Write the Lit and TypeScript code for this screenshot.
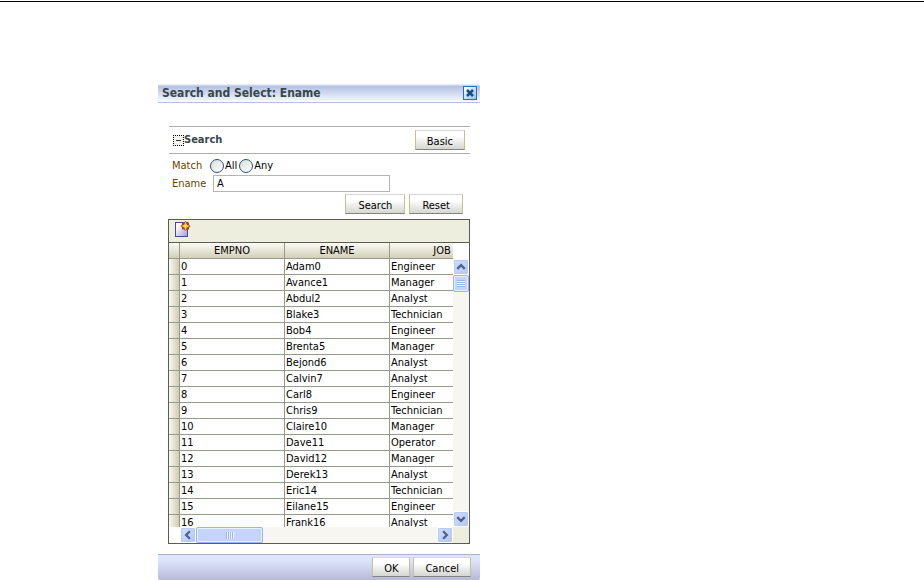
import { LitElement, html, css, svg } from "lit";
import { customElement, property } from "lit/decorators.js";

interface Employee {
  empno: number;
  ename: string;
  job: string;
}

const NAMES: [string, string][] = [
  ["Adam", "Engineer"],
  ["Avance", "Manager"],
  ["Abdul", "Analyst"],
  ["Blake", "Technician"],
  ["Bob", "Engineer"],
  ["Brenta", "Manager"],
  ["Bejond", "Analyst"],
  ["Calvin", "Analyst"],
  ["Carl", "Engineer"],
  ["Chris", "Technician"],
  ["Claire", "Manager"],
  ["Dave", "Operator"],
  ["David", "Manager"],
  ["Derek", "Analyst"],
  ["Eric", "Technician"],
  ["Eilane", "Engineer"],
  ["Frank", "Analyst"],
];

const EMPLOYEES: Employee[] = NAMES.map(([name, job], i) => ({
  empno: i,
  ename: `${name}${i}`,
  job,
}));

const CHEVRONS: Record<string, string> = {
  up: "M3.5 9.5 L7.5 5.5 L11.5 9.5",
  down: "M3.5 5.5 L7.5 9.5 L11.5 5.5",
  left: "M9.5 3.5 L5.5 7.5 L9.5 11.5",
  right: "M5.5 3.5 L9.5 7.5 L5.5 11.5",
};

const detach = html`<svg width="16" height="16" viewBox="0 0 16 16" aria-hidden="true">
  <defs>
    <linearGradient id="page" x1="0" y1="0" x2="1" y2="1">
      <stop offset="0.2" stop-color="#ffffff" />
      <stop offset="1" stop-color="#9c9cd8" />
    </linearGradient>
  </defs>
  <rect x="0.5" y="1.5" width="12" height="14" fill="url(#page)" stroke="#4a4a86" />
  <path d="M10.500 0 L12 1.500 L14 1.500 L14 3.500 L15.500 5 L14 6.500 L14 8.500 L12 8.500 L10.500 10 L9 8.500 L7 8.500 L7 6.500 L5.500 5 L7 3.500 L7 1.500 L9 1.500 Z" fill="#a8462a" />
  <path d="M10.500 0.500 L11.800 3.700 L15 5 L11.800 6.300 L10.500 9.500 L9.200 6.300 L6 5 L9.200 3.700 Z" fill="#ffcf2a" />
  <rect x="10" y="4" width="1" height="2" fill="#fffbd0" />
</svg>`;

/** A scroll bar with arrow buttons at both ends and a gripped thumb. */
@customElement("classic-scrollbar")
export class ClassicScrollbar extends LitElement {
  @property({ reflect: true }) direction: "vertical" | "horizontal" = "vertical";

  static styles = css`
    :host {
      display: flex;
      background: #f7f6f1;
    }
    :host([direction="vertical"]) {
      flex-direction: column;
      width: 16px;
    }
    :host([direction="horizontal"]) {
      height: 16px;
    }
    button {
      flex: none;
      width: 16px;
      height: 16px;
      padding: 0;
      border: 1px solid #ffffff;
      border-radius: 2px;
      background: linear-gradient(135deg, #cfdcfd, #b4c8f6);
      box-shadow: inset 0 0 0 1px #b9cbf3;
    }
    svg {
      display: block;
      width: 14px;
      height: 14px;
    }
    .arrow {
      fill: none;
      stroke: #4d6185;
      stroke-width: 2.4;
    }
    .thumb {
      display: flex;
      justify-content: center;
      align-items: center;
      box-sizing: border-box;
      border: 1px solid #98b4ea;
      border-radius: 2px;
      box-shadow: inset 0 0 0 1px #e9f0ff;
      background: #c4d4fc;
    }
    .vertical {
      height: 17px;
      width: 16px;
    }
    .horizontal {
      width: 67px;
      height: 16px;
    }
    .grip {
      width: 8px;
      height: 7px;
      background: repeating-linear-gradient(#9db4ec 0 1px, #eef4fe 1px 2px);
    }
    .horizontal .grip {
      background: repeating-linear-gradient(90deg, #9db4ec 0 1px, #eef4fe 1px 2px);
    }
    .space {
      flex: 1;
    }
  `;

  private arrow(name: string) {
    return html`<button aria-label="Scroll ${name}">
      <svg viewBox="0 0 15 15">${svg`<path class="arrow" d=${CHEVRONS[name]} />`}</svg>
    </button>`;
  }

  render() {
    const [back, forward] = this.direction === "vertical" ? ["up", "down"] : ["left", "right"];
    return html`${this.arrow(back)}
      <div class="thumb ${this.direction}"><div class="grip"></div></div>
      <div class="space"></div>
      ${this.arrow(forward)}`;
  }
}

@customElement("app-root")
export class AppRoot extends LitElement {
  static styles = css`
    :host {
      display: block;
      background: #ffffff;
      color: #000000;
      font: 11px/16px "DejaVu Sans Condensed", "DejaVu Sans", sans-serif;
    }
    .page {
      display: grid;
      grid-template-columns: 158fr 322fr 444fr;
      padding-top: 81px;
    }
    .rule {
      height: 1px;
      margin: 0;
      border: 0;
      border-top: 1px solid #000000;
      padding: 0;
    }
    .top {
      padding-top: 1px;
    }
    .dialog {
      grid-column: 2;
      min-width: 0;
    }
    .title {
      display: flex;
      justify-content: space-between;
      align-items: center;
      box-sizing: border-box;
      height: 19px;
      padding: 0 3px 0 4px;
      border-bottom: 1px solid #b4c0dc;
      border-top-left-radius: 2px;
      border-top-right-radius: 2px;
      background: linear-gradient(#e4ebfa 0 1px, #b3c0e0 2px, #eef3fe 16px, #ffffff);
    }
    h1 {
      margin: 0;
      font-size: 12px;
      line-height: 18px;
      color: #37474a;
    }
    .close {
      width: 14px;
      height: 14px;
      padding: 0;
      border: 1px solid #2e6ea6;
      background: linear-gradient(135deg, #ffffff, #8fc4ec);
    }
    .close svg,
    .tool svg {
      display: block;
    }
    .content {
      padding: 23px 10px 10px;
    }
    .section {
      display: flex;
      justify-content: space-between;
      align-items: center;
      box-sizing: border-box;
      height: 28px;
      margin-left: 1px;
      padding: 0 5px 0 4px;
      border: 1px solid #adadad;
      border-width: 1px 0;
    }
    .heading {
      display: flex;
      align-items: center;
    }
    .toggle {
      display: block;
      width: 11px;
      height: 11px;
      padding: 0;
      border: 1px dotted #000000;
      background: #f2f2ee;
    }
    .toggle svg {
      display: block;
    }
    h2 {
      margin: 0;
      font-size: 11px;
      line-height: 16px;
      color: #37474a;
    }
    .button {
      box-sizing: border-box;
      height: 20px;
      padding: 3px 11px 0;
      border: 1px solid #c5c28f;
      border-top-color: #d6d6d6;
      border-bottom-color: #85857d;
      background: linear-gradient(#ffffff 30%, #d4d6d0);
      color: #000000;
      font: inherit;
      line-height: 16px;
    }
    .form {
      display: grid;
      grid-template-columns: 38px 1fr;
      align-items: center;
      padding: 3px 6px 0 4px;
    }
    .label {
      color: #6b4300;
    }
    .choices {
      display: flex;
      align-items: center;
      height: 18px;
    }
    .choices label {
      padding: 0 2px 0 1px;
    }
    input[type="radio"] {
      appearance: none;
      box-sizing: border-box;
      width: 14px;
      height: 14px;
      margin: 0;
      border: 1px solid #1f5183;
      border-radius: 50%;
      background: linear-gradient(135deg, #dcdcd7, #ffffff);
    }
    input[type="text"] {
      box-sizing: border-box;
      width: 177px;
      max-width: 100%;
      height: 17px;
      margin-left: 3px;
      padding: 0 3px;
      border: 1px solid #b5b5b5;
      font: inherit;
      color: #000000;
    }
    .actions {
      display: flex;
      justify-content: flex-end;
      gap: 4px;
      padding: 2px 7px 5px 0;
    }
    .actions .button {
      padding: 3px 12px 0;
    }
    .panel {
      border: 1px solid #5c5c57;
    }
    .toolbar {
      box-sizing: border-box;
      height: 23px;
      padding: 1px 6px;
      border-bottom: 1px solid #5c5c57;
      background: #eeeedf;
    }
    .tool {
      display: block;
      padding: 0;
      border: 0;
      background: none;
    }
    .grid {
      display: grid;
      grid-template-columns: 1fr 16px;
      grid-template-rows: 284px 16px;
    }
    .viewport {
      overflow: hidden;
      min-width: 0;
    }
    table {
      width: 326px;
      table-layout: fixed;
      border-collapse: separate;
      border-spacing: 0;
    }
    .handle {
      width: 11px;
    }
    th,
    td {
      box-sizing: border-box;
      height: 16px;
      padding: 0 1px;
      border-right: 1px solid #949a8c;
      border-bottom: 1px solid #949a8c;
      line-height: 15px;
      text-align: left;
      font-weight: normal;
      white-space: nowrap;
    }
    thead th {
      text-align: center;
      background: linear-gradient(#fbfbf6, #d3cfb6);
    }
    tbody th {
      background: linear-gradient(90deg, #f8f8f0, #d0ccb2);
    }
    .vbar {
      padding-top: 16px;
      display: grid;
    }
    .hbar {
      padding-left: 11px;
      display: grid;
    }
    .corner {
      background: #eeeedf;
    }
    .footer {
      display: flex;
      justify-content: flex-end;
      gap: 3px;
      box-sizing: border-box;
      height: 26px;
      padding: 2px 9px 0;
      border-top: 1px solid #a9b1cf;
      border-bottom-left-radius: 2px;
      border-bottom-right-radius: 2px;
      background: linear-gradient(#dfe5fd 20%, #b6b9d9);
    }
  `;

  render() {
    return html`
      <div class="top"><hr class="rule" /></div>
      <div class="page">
        <section class="dialog" role="dialog" aria-labelledby="title">
          <header class="title">
            <h1 id="title">Search and Select: Ename</h1>
            <button class="close" aria-label="Close">
              <svg width="12" height="12" viewBox="0 0 12 12">
                <path d="M3 3 L9 9 M9 3 L3 9" stroke="#124f86" stroke-width="2.6" />
              </svg>
            </button>
          </header>
          <div class="content">
            <div class="section">
              <div class="heading">
                <button class="toggle" aria-label="Collapse search">
                  <svg width="9" height="9" viewBox="0 0 9 9">
                    <path d="M2 4.500 H7" stroke="#333333" />
                  </svg>
                </button>
                <h2>Search</h2>
              </div>
              <button class="button">Basic</button>
            </div>
            <div class="form">
              <span class="label" id="match">Match</span>
              <div class="choices" role="radiogroup" aria-labelledby="match">
                <input type="radio" name="match" id="all" /><label for="all">All</label>
                <input type="radio" name="match" id="any" /><label for="any">Any</label>
              </div>
              <label class="label" for="ename">Ename</label>
              <div><input type="text" id="ename" value="A" /></div>
            </div>
            <div class="actions">
              <button class="button">Search</button>
              <button class="button">Reset</button>
            </div>
            <div class="panel">
              <div class="toolbar"><button class="tool" aria-label="Detach">${detach}</button></div>
              <div class="grid">
                <div class="viewport">
                  <table>
                    <colgroup>
                      <col class="handle" />
                      <col />
                      <col />
                      <col />
                    </colgroup>
                    <thead>
                      <tr>
                        <th></th>
                        <th>EMPNO</th>
                        <th>ENAME</th>
                        <th>JOB</th>
                      </tr>
                    </thead>
                    <tbody>
                      ${EMPLOYEES.map(
                        (e) => html`<tr>
                          <th></th>
                          <td>${e.empno}</td>
                          <td>${e.ename}</td>
                          <td>${e.job}</td>
                        </tr>`
                      )}
                    </tbody>
                  </table>
                </div>
                <div class="vbar"><classic-scrollbar direction="vertical"></classic-scrollbar></div>
                <div class="hbar"><classic-scrollbar direction="horizontal"></classic-scrollbar></div>
                <div class="corner"></div>
              </div>
            </div>
          </div>
          <footer class="footer">
            <button class="button">OK</button>
            <button class="button">Cancel</button>
          </footer>
        </section>
      </div>
    `;
  }
}
